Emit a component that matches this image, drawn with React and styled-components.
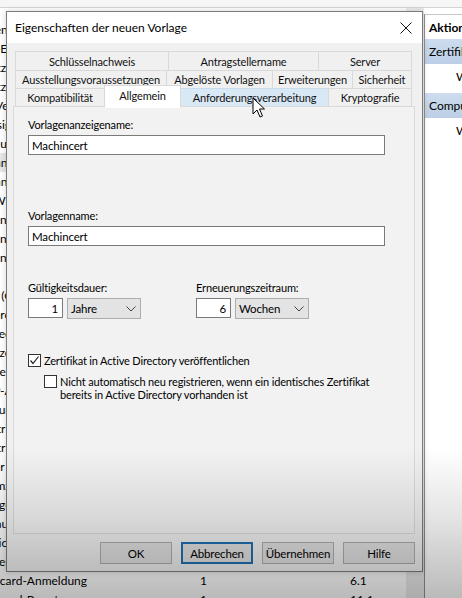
import React from 'react';
import styled, { createGlobalStyle } from 'styled-components';

const GlobalStyle = createGlobalStyle`
  html, body { margin: 0; padding: 0; background: #fff; }
  body { font-family: 'Lato', 'Liberation Sans', sans-serif; }
`;

const templates = [
  ['Authentifizierte Sitzung', '1', '3.1'],
  ['Basis-EFS', '1', '3.1'],
  ['Benutzer', '1', '3.1'],
  ['Benutzersignatur', '1', '4.1'],
  ['CEP-Verschlüsselung', '1', '4.1'],
  ['Codesignatur', '1', '3.1'],
  ['Computer', '1', '5.1'],
  ['Domänencontroller', '2', '4.1'],
  ['Domänencontrollerauthentifizierung', '2', '110.0'],
  ['EFS-Wiederherstellungs-Agent', '1', '6.1'],
  ['Exchange-Benutzer', '1', '7.1'],
  ['Exchange-Registrierungs-Agent (Offlineanforderung)', '1', '4.1'],
  ['Exchange-Signatur', '1', '6.1'],
  ['IPSec', '1', '8.1'],
  ['IPSec (Offlineanforderung)', '1', '7.1'],
  ['Kerberos-Authentifizierung', '2', '110.0'],
  ['Key Recovery Agent', '2', '105.0'],
  ['Kreuzzertifizierungsstelle', '2', '105.0'],
  ['Nur Benutzersignatur', '1', '4.1'],
  ['OCSP-Antwortsignatur', '3', '101.0'],
  ['RAS- und IAS-Server', '2', '101.0'],
  ['Registrierungs-Agent', '1', '4.1'],
  ['Registrierungs-Agent (Computer)', '1', '5.1'],
  ['Router (Offlineanforderung)', '1', '4.1'],
  ['Stammzertifizierungsstelle', '1', '5.1'],
  ['Untergeordnete Zertifizierungsstelle', '1', '5.1'],
  ['Vertrauenslistensignatur', '1', '3.1'],
  ['Verzeichnis-E-Mail-Replikation', '2', '115.0'],
  ['Webserver', '1', '4.1'],
  ['Smartcard-Anmeldung', '1', '6.1'],
  ['Smartcard-Benutzer', '1', '11.1'],
];

const tabRows = [
  { height: 19, tabs: [['Schlüsselnachweis', 154], ['Antragstellername', 151], ['Server', 94]] },
  { height: 18, tabs: [['Ausstellungsvoraussetzungen', 152], ['Abgelöste Vorlagen', 107], ['Erweiterungen', 81], ['Sicherheit', 60]] },
  { height: 18, tabs: [['Kompatibilität', 90], ['Allgemein', 77, 'active'], ['Anforderungsverarbeitung', 149, 'hover'], ['Kryptografie', 84]] },
];

const Screen = styled.div`
  position: relative;
  width: 462px;
  height: 598px;
  overflow: hidden;
  background: #fff;
  color: #000;
  font-family: 'Lato', 'Liberation Sans', sans-serif;
`;

/* console window behind the dialog */
const Console = styled.div`
  display: flex;
  flex-direction: column;
  height: 100%;
`;

const TopStrip = styled.div`
  height: 7px;
  background: #f6f6f6;
  border-bottom: 1px solid #d4d4d4;
`;

const ConsoleBody = styled.div`
  flex: 1;
  display: flex;
  min-height: 0;
`;

const TemplateList = styled.div`
  width: 424px;
  display: flex;
  background: #fff;
  overflow: hidden;
`;

const ListRows = styled.div`
  flex: 1;
  min-width: 0;
  padding-top: 12px;
`;

const ListRow = styled.div`
  display: grid;
  grid-template-columns: 200px 150px 1fr;
  height: 19px;
  align-items: center;
  font-size: 12px;
  white-space: nowrap;
  background: ${p => (p.$selected ? '#e6e6e6' : 'transparent')};
`;

const NameCell = styled.div`
  overflow: hidden;
`;

const NameText = styled.span`
  display: inline-block;
  margin-left: -31px;
`;

const ScrollTrack = styled.div`
  width: 18px;
  background: #ebebeb;
`;

const ActionsPane = styled.div`
  flex: 1;
  margin-top: 6px;
  border-left: 1px solid #8f8f8f;
  border-top: 1px solid #c8c8c8;
  background: #fff;
  white-space: nowrap;
  overflow: hidden;
`;

const PaneHeader = styled.div`
  height: 24px;
  display: flex;
  align-items: center;
  padding-left: 4px;
  font-size: 12px;
  font-weight: 700;
`;

const PaneSection = styled.div`
  height: 25px;
  display: flex;
  align-items: center;
  padding-left: 4px;
  margin-top: ${p => p.$gap || 0}px;
  font-size: 12px;
  background: linear-gradient(#cddcee, #bccfe6);
`;

const PaneItem = styled.div`
  height: 25px;
  display: flex;
  align-items: center;
  padding-left: 31px;
  font-size: 12px;
`;

/* dialog */
const Dialog = styled.div`
  position: absolute;
  left: 6px;
  top: 11px;
  width: 417px;
  height: 561px;
  box-sizing: border-box;
  display: flex;
  flex-direction: column;
  border: 1px solid #7c7c7c;
  background: #f0f0f0;
  box-shadow: 0 0 6px rgba(0, 0, 0, 0.18);
  font-size: 11px;
  letter-spacing: -0.15px;
`;

const TitleBar = styled.div`
  height: 31px;
  flex: none;
  display: flex;
  align-items: center;
  justify-content: space-between;
  padding: 0 10px 0 8px;
  background: #fff;
  font-size: 12px;
  letter-spacing: 0;
`;

const DialogBody = styled.div`
  flex: 1;
  display: flex;
  flex-direction: column;
  padding: 8px 7px 7px 6px;
  min-height: 0;
`;

const TabStrip = styled.div`
  display: flex;
  flex-direction: column;
  margin: 0 2px;
`;

const TabRow = styled.div`
  display: flex;
  height: ${p => p.$h}px;
`;

const Tab = styled.div`
  width: ${p => p.$w}px;
  box-sizing: border-box;
  display: flex;
  align-items: center;
  justify-content: center;
  white-space: nowrap;
  margin: 0 0 -1px -1px;
  border: 1px solid #d9d9d9;
  background: #f0f0f0;
  color: #111;
  &:first-child { margin-left: 0; }
  ${p => p.$state === 'hover' && `
    background: #d9e8f5;
    border-color: #c9dcee;
  `}
  ${p => p.$state === 'active' && `
    position: relative;
    z-index: 1;
    height: 23px;
    margin-top: -3px;
    padding-bottom: 3px;
    background: #fff;
    border-bottom-color: #fff;
  `}
`;

const TabPanel = styled.div`
  flex: 1;
  display: flex;
  flex-direction: column;
  padding: 10px 14px 0;
  background: #f2f2f2;
  border: 1px solid #d9d9d9;
`;

const FieldLabel = styled.div`
  line-height: 15px;
  margin-top: ${p => p.$top || 0}px;
  margin-bottom: 3px;
`;

const TextBox = styled.div`
  width: ${p => p.$w}px;
  height: 20px;
  box-sizing: border-box;
  display: flex;
  align-items: center;
  justify-content: ${p => (p.$right ? 'flex-end' : 'flex-start')};
  padding: 0 4px 0 3px;
  background: #fff;
  border: 1px solid #7a7a7a;
  font-size: 11.5px;
`;

const PeriodGrid = styled.div`
  display: grid;
  grid-template-columns: 168px auto;
  margin-top: 34px;
`;

const PeriodGroup = styled.div`
  display: flex;
  flex-direction: column;
`;

const PeriodInputs = styled.div`
  display: flex;
  gap: 4px;
`;

const Select = styled.div`
  width: 74px;
  height: 21px;
  box-sizing: border-box;
  display: flex;
  align-items: center;
  justify-content: space-between;
  padding: 0 4px 0 3px;
  background: #e3e3e3;
  border: 1px solid #adadad;
  font-size: 11.5px;
`;

const CheckRow = styled.div`
  display: flex;
  align-items: ${p => (p.$top ? 'flex-start' : 'center')};
  gap: 3px;
  margin-top: ${p => p.$mt}px;
  margin-left: ${p => p.$indent || 0}px;
  line-height: 13px;
`;

const Box = styled.div`
  width: 13px;
  height: 13px;
  flex: none;
  box-sizing: border-box;
  display: flex;
  align-items: center;
  justify-content: center;
  background: #fff;
  border: 1px solid #333;
`;

const ButtonBar = styled.div`
  display: flex;
  justify-content: flex-end;
  gap: 9px;
  margin-top: 8px;
`;

const Button = styled.div`
  width: 72px;
  height: 22px;
  box-sizing: border-box;
  display: flex;
  align-items: center;
  justify-content: center;
  background: #e1e1e1;
  border: ${p => (p.$default ? '2px solid #1f6fb2' : '1px solid #adadad')};
  font-size: 11.5px;
`;

const Cursor = styled.svg`
  position: absolute;
  left: 252px;
  top: 97px;
`;

const Shade = styled.div`
  position: absolute;
  left: 0;
  right: 0;
  bottom: 0;
  height: 150px;
  pointer-events: none;
  background: linear-gradient(rgba(0, 0, 0, 0), rgba(0, 0, 0, 0.1) 45%, rgba(0, 0, 0, 0.27));
`;

const Chevron = () => (
  <svg width="10" height="6" viewBox="0 0 10 6">
    <polyline points="0.5,0.5 5,5 9.5,0.5" fill="none" stroke="#444" strokeWidth="1" />
  </svg>
);

const Check = () => (
  <svg width="11" height="11" viewBox="0 0 11 11">
    <polyline points="1.5,5.5 4,8.5 9.5,1.5" fill="none" stroke="#222" strokeWidth="1.2" />
  </svg>
);

const CloseIcon = () => (
  <svg width="12" height="12" viewBox="0 0 12 12">
    <path d="M0.5 0.5 L11.5 11.5 M11.5 0.5 L0.5 11.5" stroke="#111" strokeWidth="1" />
  </svg>
);

const PeriodField = ({ label, value, unit }) => (
  <PeriodGroup>
    <FieldLabel>{label}</FieldLabel>
    <PeriodInputs>
      <TextBox $w={35} $right>{value}</TextBox>
      <Select>{unit}<Chevron /></Select>
    </PeriodInputs>
  </PeriodGroup>
);

export default function App() {
  return (
    <Screen>
      <GlobalStyle />
      <Console>
        <TopStrip />
        <ConsoleBody>
          <TemplateList>
            <ListRows>
              {templates.map(([name, schema, version], i) => (
                <ListRow key={name} $selected={i === 7}>
                  <NameCell><NameText>{name}</NameText></NameCell>
                  <span>{schema}</span>
                  <span>{version}</span>
                </ListRow>
              ))}
            </ListRows>
            <ScrollTrack />
          </TemplateList>
          <ActionsPane>
            <PaneHeader>Aktionen</PaneHeader>
            <PaneSection>Zertifikatvorlagen</PaneSection>
            <PaneItem>Weitere Aktionen</PaneItem>
            <PaneSection $gap={4}>Computer</PaneSection>
            <PaneItem>Weitere Aktionen</PaneItem>
          </ActionsPane>
        </ConsoleBody>
      </Console>

      <Dialog>
        <TitleBar>
          <span>Eigenschaften der neuen Vorlage</span>
          <CloseIcon />
        </TitleBar>
        <DialogBody>
          <TabStrip>
            {tabRows.map((row, r) => (
              <TabRow key={r} $h={row.height}>
                {row.tabs.map(([label, w, state]) => (
                  <Tab key={label} $w={w} $state={state}>{label}</Tab>
                ))}
              </TabRow>
            ))}
          </TabStrip>
          <TabPanel>
            <FieldLabel>Vorlagenanzeigename:</FieldLabel>
            <TextBox $w={357}>Machincert</TextBox>
            <FieldLabel $top={53}>Vorlagenname:</FieldLabel>
            <TextBox $w={357}>Machincert</TextBox>
            <PeriodGrid>
              <PeriodField label="Gültigkeitsdauer:" value="1" unit="Jahre" />
              <PeriodField label="Erneuerungszeitraum:" value="6" unit="Wochen" />
            </PeriodGrid>
            <CheckRow $mt={35}>
              <Box><Check /></Box>
              <span>Zertifikat in Active Directory veröffentlichen</span>
            </CheckRow>
            <CheckRow $mt={8} $indent={16} $top>
              <Box />
              <span>Nicht automatisch neu registrieren, wenn ein identisches Zertifikat<br />bereits in Active Directory vorhanden ist</span>
            </CheckRow>
          </TabPanel>
          <ButtonBar>
            <Button>OK</Button>
            <Button $default>Abbrechen</Button>
            <Button>Übernehmen</Button>
            <Button>Hilfe</Button>
          </ButtonBar>
        </DialogBody>
      </Dialog>

      <Cursor width="14" height="22" viewBox="0 0 14 22">
        <path d="M1 1 L1 17 L5 13 L8 20 L10.5 19 L7.5 12 L12.5 12 Z" fill="#fff" stroke="#000" strokeWidth="1" strokeLinejoin="round" />
      </Cursor>
      <Shade />
    </Screen>
  );
}
